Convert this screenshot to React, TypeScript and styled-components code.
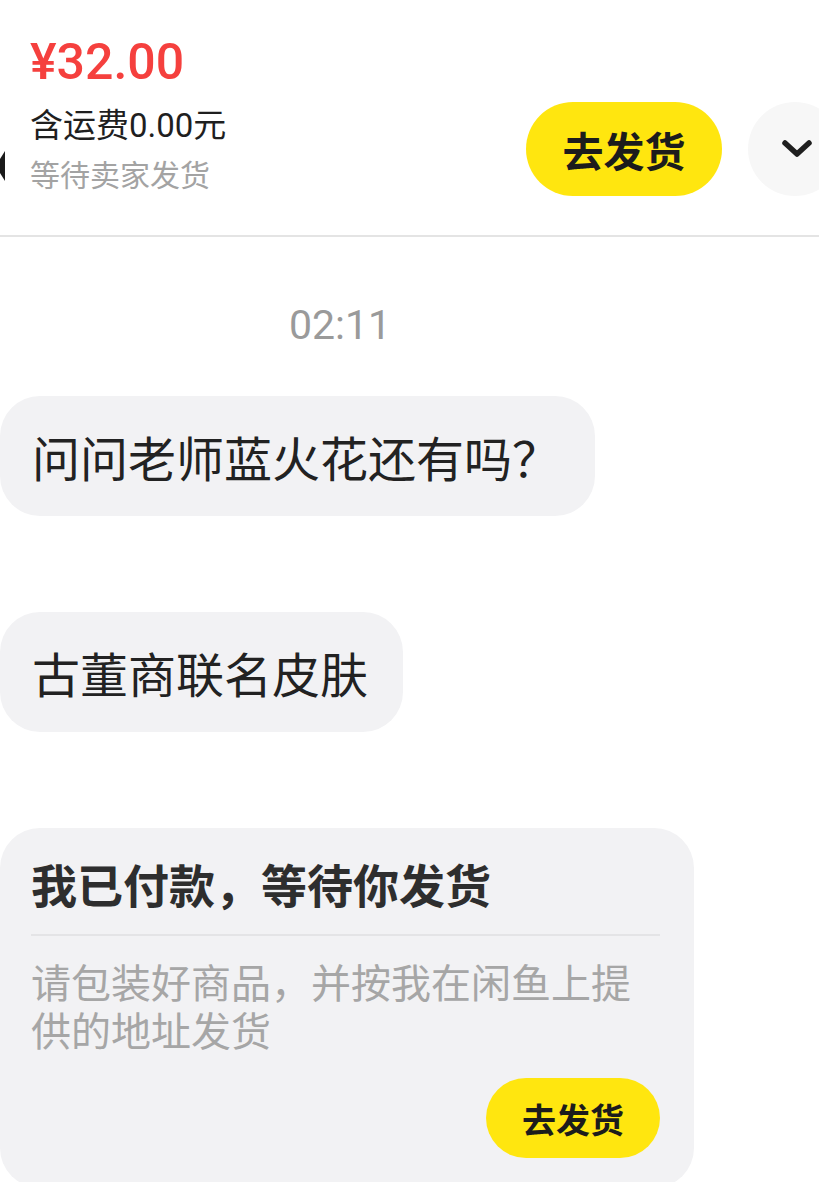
import React from "react";
import styled, { createGlobalStyle } from "styled-components";

const GlobalStyle = createGlobalStyle`
  html, body {
    margin: 0;
    padding: 0;
    background: #ffffff;
  }
  body {
    font-family: Roboto, "Noto Sans CJK SC", sans-serif;
    overflow-x: hidden;
  }
  * { box-sizing: border-box; }
`;

const Page = styled.div`
  width: 819px;
  min-height: 1182px;
  overflow: hidden;
  background: #ffffff;
`;

const Header = styled.header`
  display: flex;
  align-items: flex-start;
  height: 237px;
  border-bottom: 2px solid #e4e4e4;
  overflow: hidden;
`;

const EdgeMark = styled.div`
  width: 6px;
  flex-shrink: 0;
  padding-top: 151px;
  display: flex;
`;

const Info = styled.div`
  display: flex;
  flex-direction: column;
  padding-top: 32px;
  margin-left: 24px;
`;

const Price = styled.div`
  font-size: 50px;
  line-height: 60px;
  color: #f5403e;
  font-weight: 500;
`;

const Shipping = styled.div`
  margin-top: 12px;
  font-size: 33px;
  line-height: 44px;
  color: #1f1f1f;
`;

const Status = styled.div`
  margin-top: 8px;
  font-size: 30px;
  line-height: 40px;
  color: #a3a3a3;
`;

const Actions = styled.div`
  margin-left: auto;
  margin-right: -23px;
  padding-top: 102px;
  display: flex;
  align-items: center;
  gap: 26px;
`;

const ShipButton = styled.button<{ $small?: boolean }>`
  border: none;
  background: #ffe60f;
  color: #1c1c1c;
  font-family: "Noto Sans CJK SC", sans-serif;
  font-weight: 700;
  font-size: ${(p) => (p.$small ? "34px" : "41px")};
  width: ${(p) => (p.$small ? "174px" : "196px")};
  height: ${(p) => (p.$small ? "80px" : "94px")};
  border-radius: 999px;
  display: flex;
  align-items: center;
  justify-content: center;
  padding: 0;
  cursor: pointer;
`;

const MoreButton = styled.button`
  border: none;
  width: 94px;
  height: 94px;
  border-radius: 50%;
  background: #f7f7f7;
  display: flex;
  align-items: center;
  justify-content: center;
  padding: 0;
  cursor: pointer;
`;

const Chat = styled.main`
  display: flex;
  flex-direction: column;
  padding-top: 58px;
`;

const Time = styled.div`
  width: 680px;
  text-align: center;
  font-size: 41px;
  line-height: 60px;
  color: #9a9a9a;
`;

const Messages = styled.div`
  margin-top: 41px;
  display: flex;
  flex-direction: column;
  align-items: flex-start;
  gap: 96px;
`;

const Bubble = styled.div`
  background: #f2f2f4;
  border-radius: 40px;
  padding: 30px 35px 30px 32px;
  font-family: "Noto Sans CJK SC", sans-serif;
  font-size: 48px;
  line-height: 60px;
  color: #222222;
`;

const Card = styled.div`
  width: 694px;
  background: #f2f2f4;
  border-radius: 40px;
  padding: 25px 34px 30px 31px;
  display: flex;
  flex-direction: column;
`;

const CardTitle = styled.div`
  font-family: "Noto Sans CJK SC", sans-serif;
  font-size: 46px;
  line-height: 60px;
  font-weight: 700;
  color: #2e2e2e;
`;

const CardDivider = styled.div`
  margin-top: 21px;
  height: 2px;
  background: #e4e4e6;
`;

const CardText = styled.div`
  margin-top: 21px;
  font-family: "Noto Sans CJK SC", sans-serif;
  font-size: 40px;
  line-height: 48px;
  color: #a6a6a6;
`;

const CardFooter = styled.div`
  margin-top: 25px;
  display: flex;
  justify-content: flex-end;
`;

export default function App() {
  return (
    <Page>
      <GlobalStyle />
      <Header>
        <EdgeMark>
          <svg width="6" height="30" viewBox="0 0 6 30">
            <polygon points="5,0 5,30 0,22 0,8" fill="#1a1a1a" />
          </svg>
        </EdgeMark>
        <Info>
          <Price>¥32.00</Price>
          <Shipping>含运费0.00元</Shipping>
          <Status>等待卖家发货</Status>
        </Info>
        <Actions>
          <ShipButton>去发货</ShipButton>
          <MoreButton aria-label="更多">
            <svg width="34" height="24" viewBox="0 0 34 24" style={{ marginLeft: 4 }}>
              <polyline
                points="5,6 17,17 29,6"
                fill="none"
                stroke="#1f1f1f"
                strokeWidth="5.5"
                strokeLinecap="round"
                strokeLinejoin="round"
              />
            </svg>
          </MoreButton>
        </Actions>
      </Header>
      <Chat>
        <Time>02:11</Time>
        <Messages>
          <Bubble>问问老师蓝火花还有吗？</Bubble>
          <Bubble>古董商联名皮肤</Bubble>
          <Card>
            <CardTitle>我已付款，等待你发货</CardTitle>
            <CardDivider />
            <CardText>请包装好商品，并按我在闲鱼上提供的地址发货</CardText>
            <CardFooter>
              <ShipButton $small>去发货</ShipButton>
            </CardFooter>
          </Card>
        </Messages>
      </Chat>
    </Page>
  );
}
